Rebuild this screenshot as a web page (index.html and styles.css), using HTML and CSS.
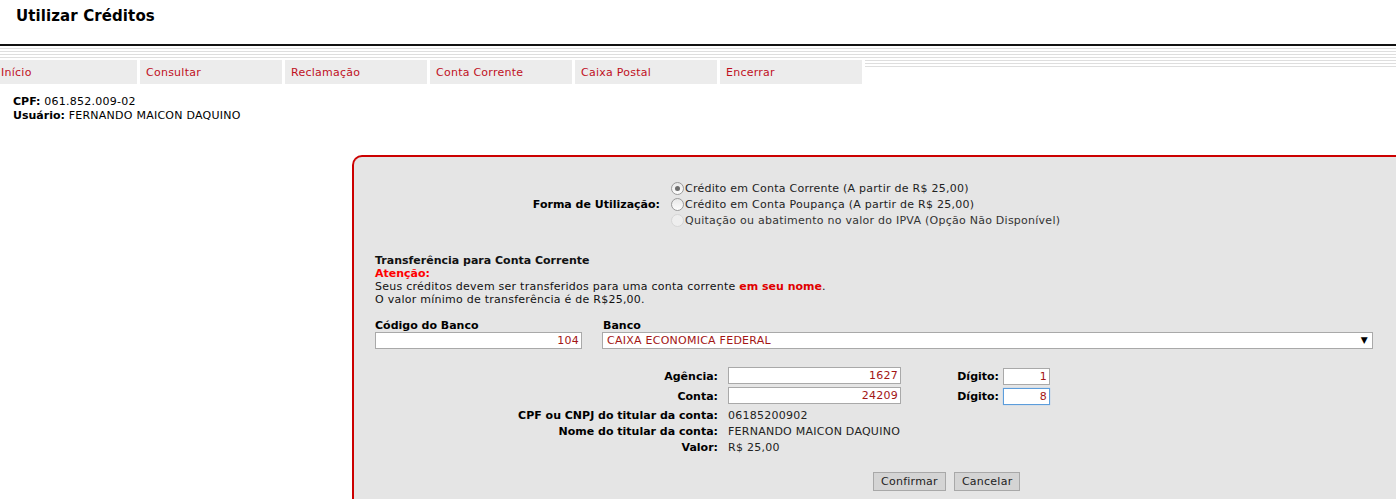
FILE: index.html
```html
<!DOCTYPE html>
<html lang="pt-BR">
<head>
<meta charset="utf-8">
<title>Utilizar Créditos</title>
<link rel="stylesheet" href="styles.css">
</head>
<body>
<h1 class="title">Utilizar Créditos</h1>
<div class="rule"></div>
<nav class="nav">
  <a class="tab first" href="#">Início</a>
  <a class="tab" href="#">Consultar</a>
  <a class="tab" href="#">Reclamação</a>
  <a class="tab" href="#">Conta Corrente</a>
  <a class="tab" href="#">Caixa Postal</a>
  <a class="tab" href="#">Encerrar</a>
</nav>
<div class="info">
  <div><b>CPF:</b> 061.852.009-02</div>
  <div><b>Usuário:</b> FERNANDO MAICON DAQUINO</div>
</div>
<section class="panel">
  <div class="forma">
    <div class="forma-label">Forma de Utilização:</div>
    <div class="radios">
      <label class="radio-row"><span class="radio checked"></span>Crédito em Conta Corrente (A partir de R$ 25,00)</label>
      <label class="radio-row"><span class="radio"></span>Crédito em Conta Poupança (A partir de R$ 25,00)</label>
      <label class="radio-row"><span class="radio disabled"></span>Quitação ou abatimento no valor do IPVA (Opção Não Disponível)</label>
    </div>
  </div>
  <div class="transfer">
    <div class="bold">Transferência para Conta Corrente</div>
    <div class="bold red">Atenção:</div>
    <div>Seus créditos devem ser transferidos para uma conta corrente <span class="bold red2">em seu nome</span>.</div>
    <div>O valor mínimo de transferência é de R$25,00.</div>
  </div>
  <div class="bank">
    <div class="bank-code">
      <div class="bold">Código do Banco</div>
      <input class="field code" type="text" value="104">
    </div>
    <div class="bank-name">
      <div class="bold">Banco</div>
      <div class="select"><span>CAIXA ECONOMICA FEDERAL</span><span class="arrow">▼</span></div>
    </div>
  </div>
  <div class="details">
    <div class="dl bold">Agência:</div>
    <div class="dv"><input class="field mid" type="text" value="1627"></div>
    <div class="dl2 bold">Dígito:</div>
    <div class="dv2"><input class="field dig" type="text" value="1"></div>

    <div class="dl bold">Conta:</div>
    <div class="dv"><input class="field mid" type="text" value="24209"></div>
    <div class="dl2 bold">Dígito:</div>
    <div class="dv2"><input class="field dig focused" type="text" value="8"></div>

    <div class="dl bold text first-text">CPF ou CNPJ do titular da conta:</div>
    <div class="dv text wide first-text">06185200902</div>

    <div class="dl bold text">Nome do titular da conta:</div>
    <div class="dv text wide">FERNANDO MAICON DAQUINO</div>

    <div class="dl bold text">Valor:</div>
    <div class="dv text wide">R$ 25,00</div>
  </div>
  <div class="buttons">
    <button class="btn" type="button">Confirmar</button>
    <button class="btn" type="button">Cancelar</button>
  </div>
</section>
</body>
</html>
```
FILE: styles.css
```css
html, body {
  margin: 0;
  padding: 0;
  background: #fff;
}
body {
  font-family: "DejaVu Sans", Verdana, sans-serif;
  font-size: 11px;
  letter-spacing: 0.25px;
  color: #000;
  overflow: hidden;
}
b, .bold {
  font-weight: bold;
  letter-spacing: 0;
}
.title {
  margin: 0;
  padding: 6px 0 0 16px;
  height: 22px;
  font-size: 15px;
  line-height: 20px;
  font-weight: bold;
  letter-spacing: 0.1px;
  color: #000;
}
.rule {
  margin-top: 16px;
  border-top: 2px solid #111;
  height: 0;
}
.nav {
  display: flex;
  height: 38px;
  padding-top: 14px;
  box-sizing: border-box;
  margin-left: -5px;
  background-image: repeating-linear-gradient(to bottom, #fff 0 2px, #dedede 2px 3px);
  background-size: 100% 22px;
  background-repeat: no-repeat;
}
.tab {
  display: block;
  width: 142px;
  height: 24px;
  line-height: 22px;
  padding-top: 2px;
  margin-right: 3px;
  padding-left: 6px;
  box-sizing: border-box;
  background: #ececec;
  color: #c0101e;
  text-decoration: none;
  box-shadow: 3px 0 0 #fff;
}
.info {
  margin-top: 11px;
  padding-left: 13px;
  line-height: 14px;
}
.red { color: #ff0000; }
.red2 { color: #e00000; }
.panel {
  margin: 32px 0 0 352px;
  border: 2px solid #cc0000;
  border-right: none;
  border-bottom: none;
  border-radius: 10px 0 0 0;
  background: #e5e5e5;
  height: 345px;
  box-sizing: border-box;
}
.forma {
  display: flex;
  align-items: center;
  padding-top: 23px;
}
.forma-label {
  width: 306px;
  text-align: right;
  font-weight: bold;
  letter-spacing: 0;
  padding-right: 10px;
  box-sizing: content-box;
}
.radios {
  display: flex;
  flex-direction: column;
}
.radio-row {
  display: flex;
  align-items: center;
  height: 16px;
  color: #222;
}
.radio-row:last-child { color: #333; }
.radio {
  display: inline-block;
  width: 11px;
  height: 11px;
  border: 1px solid #9a9a9a;
  border-radius: 50%;
  background: linear-gradient(#e8e8e8, #fdfdfd);
  margin-right: 1px;
  margin-left: 1px;
  position: relative;
}
.radio.checked::after {
  content: "";
  position: absolute;
  left: 3px;
  top: 3px;
  width: 5px;
  height: 5px;
  border-radius: 50%;
  background: #6d6d6d;
}
.radio.disabled {
  border-color: #d6d6d6;
  background: #eeeeee;
}
.transfer {
  margin-top: 26px;
  padding-left: 21px;
  line-height: 13px;
  color: #111;
}
.bank {
  display: flex;
  margin-top: 13px;
  padding-left: 21px;
  line-height: 13px;
}
.bank-code {
  width: 228px;
}
.field {
  display: block;
  box-sizing: border-box;
  height: 17px;
  border: 1px solid #a9a9a9;
  background: #fff;
  font-family: "DejaVu Sans", Verdana, sans-serif;
  font-size: 11px;
  letter-spacing: 0.25px;
  color: #a31515;
  text-align: right;
  padding: 0 2px 0 2px;
  margin: 0;
  outline: none;
}
.code {
  width: 207px;
}
.select {
  display: flex;
  justify-content: space-between;
  align-items: center;
  box-sizing: border-box;
  width: 771px;
  height: 17px;
  margin-left: -1px;
  border: 1px solid #a9a9a9;
  background: #fff;
  color: #a31515;
  padding: 0 4px 0 4px;
}
.arrow {
  color: #000;
  font-size: 9px;
}
.details {
  display: grid;
  grid-template-columns: 364px 183px 102px 51px;
  margin-top: 17px;
  row-gap: 0;
  align-items: center;
}
.dl {
  grid-column: 1;
  text-align: right;
}
.dv {
  grid-column: 2;
  padding-left: 10px;
}
.dv .field {
  margin: 1px 0 2px;
}
.dv.wide { grid-column: 2 / span 3; }
.dl2 {
  grid-column: 3;
  text-align: right;
  padding-right: 4px;
}
.dv2 { grid-column: 4; }
.mid { width: 173px; }
.dig { width: 47px; }
.focused {
  border-color: #5c9ddb;
  box-shadow: 0 0 1px #8fbbef;
}
.text {
  line-height: 16px;
  color: #222;
}
.dl.text { color: #000; }
.first-text {
  margin-top: 2px;
}
.buttons {
  display: flex;
  gap: 8px;
  padding-left: 519px;
  margin-top: 16px;
}
.btn {
  height: 19px;
  box-sizing: border-box;
  padding: 0 7px;
  border: 1px solid #a8a8a8;
  background: #d4d4d4;
  font-family: "DejaVu Sans", Verdana, sans-serif;
  font-size: 11px;
  letter-spacing: 0.25px;
  color: #222;
}
```
